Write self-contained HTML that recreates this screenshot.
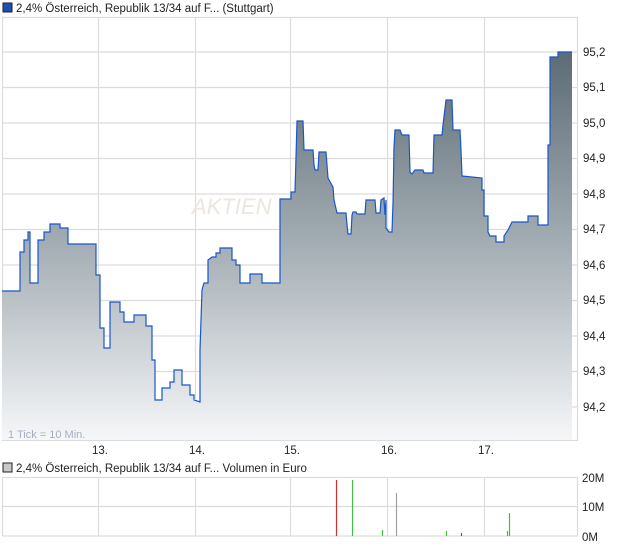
<!DOCTYPE html>
<html><head><meta charset="utf-8"><style>
body{margin:0;background:#fff;width:620px;height:546px;overflow:hidden;font-family:"Liberation Sans",sans-serif;}
svg text{font-family:"Liberation Sans",sans-serif;}
</style></head><body>
<svg width="620" height="546" viewBox="0 0 620 546" xmlns="http://www.w3.org/2000/svg">
<defs>
<linearGradient id="g" x1="0" y1="52" x2="0" y2="441" gradientUnits="userSpaceOnUse">
<stop offset="0" stop-color="#5c6b74"/>
<stop offset="0.5" stop-color="#a4aeb4"/>
<stop offset="1" stop-color="#f6f7f9"/>
</linearGradient>
</defs>
<rect x="3" y="3" width="9" height="9" fill="#1e4fb8" stroke="#222" stroke-width="1"/>
<text x="16" y="12" font-size="11.5" fill="#222">2,4% Österreich, Republik 13/34 auf F... (Stuttgart)</text>
<g stroke="#dcdcdc" stroke-width="1.2" fill="none">
<rect x="2.5" y="17.5" width="575" height="423"/>
<line x1="2" y1="52" x2="578" y2="52"/><line x1="2" y1="87.5" x2="578" y2="87.5"/>
<line x1="2" y1="123" x2="578" y2="123"/><line x1="2" y1="158.5" x2="578" y2="158.5"/>
<line x1="2" y1="194" x2="578" y2="194"/><line x1="2" y1="229.5" x2="578" y2="229.5"/>
<line x1="2" y1="265" x2="578" y2="265"/><line x1="2" y1="300.5" x2="578" y2="300.5"/>
<line x1="2" y1="336" x2="578" y2="336"/><line x1="2" y1="371.5" x2="578" y2="371.5"/>
<line x1="2" y1="407" x2="578" y2="407"/>
<line x1="98.5" y1="17" x2="98.5" y2="441"/><line x1="195.5" y1="17" x2="195.5" y2="441"/>
<line x1="290.5" y1="17" x2="290.5" y2="441"/><line x1="387.5" y1="17" x2="387.5" y2="441"/>
<line x1="484.5" y1="17" x2="484.5" y2="441"/>
</g>
<text x="192" y="214" font-size="22" fill="#ece6e0" font-style="italic">AKTIEN</text>
<path d="M2,291 L20,291 L20,252 L24,252 L24,240 L28,240 L28,232 L30,232 L30,283 L38,283 L38,240 L44,240 L44,232 L50,232 L50,224 L60,224 L60,228 L68,228 L68,244 L96,244 L96,275 L100,275 L100,328 L104,328 L104,348 L110,348 L110,302 L120,302 L120,312 L124,312 L124,322 L134,322 L134,315 L146,315 L146,326 L152,326 L152,360 L155,360 L155,400 L162,400 L162,388 L170,388 L170,382 L174,382 L174,370 L182,370 L182,385 L190,385 L190,395 L194,395 L194,400 L200,402 L200,350 L202,290 L204,283 L208,283 L208,260 L212,257 L216,257 L216,253 L220,253 L220,248 L232,248 L232,260 L236,260 L236,265 L240,265 L240,283 L250,283 L250,274 L262,274 L262,283 L280,283 L280,199 L291,199 L291,192 L295,192 L296,157 L297,121 L303,121 L304,150 L313,150 L314,165 L315,170 L318,170 L319,152 L326,152 L328,178 L333,187 L334,200 L337,213 L346,213 L347,225 L348,234 L351,234 L352,215 L353,212 L356,212 L357,214 L365,214 L366,200 L375,200 L376,213 L380,213 L381,200 L384,198 L385,215 L386,200 L386,228 L389,232 L392,232 L393,203 L394,147 L395,130 L400,130 L402,135 L409,135 L410,172 L412,174 L415,170 L423,170 L424,173 L433,173 L434,135 L442,135 L443,125 L446,100 L452,100 L453,130 L460,130 L461,150 L462,176 L482,178 L482,190 L484,190 L484,216 L488,216 L488,232 L490,236 L496,236 L496,242 L504,242 L504,236 L508,230 L512,222 L528,222 L528,216 L538,216 L538,225 L548,225 L548,145 L550,145 L550,57 L558,57 L558,52 L572,52 L572,440 L2,440 Z" fill="url(#g)"/>
<path fill="none" stroke="#1a56cc" stroke-width="1.2" d="M2,291 L20,291 L20,252 L24,252 L24,240 L28,240 L28,232 L30,232 L30,283 L38,283 L38,240 L44,240 L44,232 L50,232 L50,224 L60,224 L60,228 L68,228 L68,244 L96,244 L96,275 L100,275 L100,328 L104,328 L104,348 L110,348 L110,302 L120,302 L120,312 L124,312 L124,322 L134,322 L134,315 L146,315 L146,326 L152,326 L152,360 L155,360 L155,400 L162,400 L162,388 L170,388 L170,382 L174,382 L174,370 L182,370 L182,385 L190,385 L190,395 L194,395 L194,400 L200,402 L200,350 L202,290 L204,283 L208,283 L208,260 L212,257 L216,257 L216,253 L220,253 L220,248 L232,248 L232,260 L236,260 L236,265 L240,265 L240,283 L250,283 L250,274 L262,274 L262,283 L280,283 L280,199 L291,199 L291,192 L295,192 L296,157 L297,121 L303,121 L304,150 L313,150 L314,165 L315,170 L318,170 L319,152 L326,152 L328,178 L333,187 L334,200 L337,213 L346,213 L347,225 L348,234 L351,234 L352,215 L353,212 L356,212 L357,214 L365,214 L366,200 L375,200 L376,213 L380,213 L381,200 L384,198 L385,215 L386,200 L386,228 L389,232 L392,232 L393,203 L394,147 L395,130 L400,130 L402,135 L409,135 L410,172 L412,174 L415,170 L423,170 L424,173 L433,173 L434,135 L442,135 L443,125 L446,100 L452,100 L453,130 L460,130 L461,150 L462,176 L482,178 L482,190 L484,190 L484,216 L488,216 L488,232 L490,236 L496,236 L496,242 L504,242 L504,236 L508,230 L512,222 L528,222 L528,216 L538,216 L538,225 L548,225 L548,145 L550,145 L550,57 L558,57 L558,52 L572,52"/>
<text x="8" y="438" font-size="11" fill="#a8aec0">1 Tick = 10 Min.</text>
<g font-size="11.5" fill="#222">
<text x="583" y="56">95,2</text><text x="583" y="91">95,1</text><text x="583" y="127">95,0</text>
<text x="583" y="162">94,9</text><text x="583" y="198">94,8</text><text x="583" y="233">94,7</text>
<text x="583" y="269">94,6</text><text x="583" y="304">94,5</text><text x="583" y="340">94,4</text>
<text x="583" y="375">94,3</text><text x="583" y="411">94,2</text>
<text x="92" y="454">13.</text><text x="189" y="454">14.</text><text x="284" y="454">15.</text>
<text x="381" y="454">16.</text><text x="478" y="454">17.</text>
</g>
<rect x="3" y="463" width="9" height="9" fill="#c8c8c8" stroke="#222" stroke-width="1"/>
<text x="16" y="472" font-size="11.5" fill="#222">2,4% Österreich, Republik 13/34 auf F... Volumen in Euro</text>
<g stroke="#dcdcdc" stroke-width="1.2" fill="none">
<rect x="2.5" y="477.5" width="575" height="58.5"/>
<line x1="2" y1="506.5" x2="578" y2="506.5"/>
<line x1="98.5" y1="477" x2="98.5" y2="536"/><line x1="195.5" y1="477" x2="195.5" y2="536"/>
<line x1="290.5" y1="477" x2="290.5" y2="536"/><line x1="387.5" y1="477" x2="387.5" y2="536"/>
<line x1="484.5" y1="477" x2="484.5" y2="536"/>
</g>
<g stroke-width="1.2">
<line x1="336.5" y1="480" x2="336.5" y2="536" stroke="#d03030"/>
<line x1="352.5" y1="480" x2="352.5" y2="536" stroke="#40c040"/>
<line x1="382.5" y1="530" x2="382.5" y2="536" stroke="#40c040"/>
<line x1="396.5" y1="493" x2="396.5" y2="536" stroke="#a0a0a0"/>
<line x1="446.5" y1="531" x2="446.5" y2="536" stroke="#40c040"/>
<line x1="461.5" y1="533" x2="461.5" y2="536" stroke="#d03030"/>
<line x1="507.5" y1="531" x2="507.5" y2="536" stroke="#40c040"/>
<line x1="509.5" y1="513" x2="509.5" y2="536" stroke="#40c040"/>
</g>
<g font-size="11.5" fill="#222">
<text x="582" y="482">20M</text><text x="582" y="511">10M</text><text x="582" y="541">0M</text>
</g>
</svg>
</body></html>
